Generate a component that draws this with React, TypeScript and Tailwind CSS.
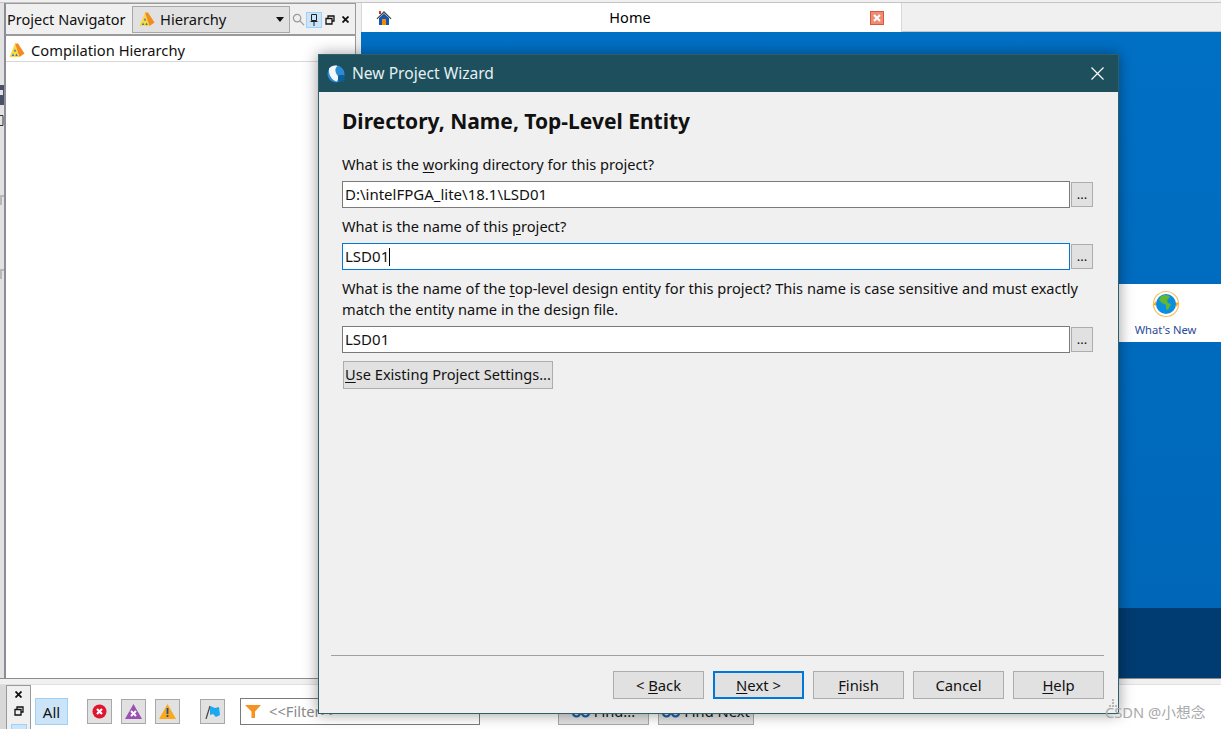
import React from "react";

const font = { fontFamily: '"Noto Sans", "Noto Sans CJK SC", sans-serif' };

function Pyramid() {
  return (
    <svg width="16" height="15" viewBox="0 0 16 15" className="shrink-0">
      <path d="M6 0.500 L0.500 14 H10.500 Z" fill="#ffd83a" />
      <path d="M6 0.500 L9 0.500 L15.500 10.500 L10.500 14 Z" fill="#f28c1e" />
      <path d="M6 6l1.200 2.500H4.800zM4 10.500l1.200 2.500H2.800zM7.500 10.500l1.200 2.500H6.300z" fill="#1a7fd6" />
    </svg>
  );
}

function U({ children }: { children: React.ReactNode }) {
  return <span className="underline underline-offset-2 decoration-1">{children}</span>;
}

function IconTool({ children }: { children: React.ReactNode }) {
  return (
    <div className="flex h-[25px] w-[25px] items-center justify-center border border-[#a8a8a8] bg-[#e1e1e1]">
      {children}
    </div>
  );
}

function WizardButton({ children, primary }: { children: React.ReactNode; primary?: boolean }) {
  return (
    <button
      className={
        primary
          ? "flex h-[28px] w-[91px] items-center justify-center whitespace-pre border-2 border-[#0078d7] bg-[#e1e1e1] text-[14.8px] text-[#111]"
          : "flex h-[28px] w-[91px] items-center justify-center whitespace-pre border border-[#adadad] bg-[#e1e1e1] text-[14.8px] text-[#111]"
      }
    >
      {children}
    </button>
  );
}

function Field({ value, focused }: { value: string; focused?: boolean }) {
  return (
    <div className="flex h-[27px] items-center gap-[1px]">
      <div
        className={
          focused
            ? "flex h-[27px] w-[728px] items-center border border-[#0078d7] bg-white pl-[2px] text-[15px] text-[#111]"
            : "flex h-[27px] w-[728px] items-center border border-[#7a7a7a] bg-white pl-[2px] text-[15px] text-[#111]"
        }
      >
        <span>{value}</span>
        {focused && <span className="h-[18px] w-px bg-black" />}
      </div>
      <button className="flex h-[25px] w-[22px] items-center justify-center border border-[#adadad] bg-[#e1e1e1] text-[13px] leading-none text-[#111]">
        ...
      </button>
    </div>
  );
}

function Binoculars() {
  return (
    <svg width="18" height="12" viewBox="0 0 18 12" fill="none" stroke="#1c5fa8" strokeWidth="2.200" className="shrink-0">
      <circle cx="4.500" cy="7" r="3.500" />
      <circle cx="13.500" cy="7" r="3.500" />
      <path d="M8 6h2" stroke="#333" />
    </svg>
  );
}

export default function App() {
  return (
    <div
      style={font}
      className="relative flex h-[729px] w-[1221px] flex-col overflow-hidden bg-white text-[14.7px] text-[#111]"
    >
      {/* Top edge */}
      <div className="h-[3px] shrink-0 border-b border-[#c4c4c4] bg-[#f0f0f0]" />

      {/* Main area */}
      <div className="flex h-[675px] shrink-0 bg-[#f0f0f0]">
        <div className="h-full w-[6px] shrink-0 border-r-2 border-[#8c8c98] bg-[#e2e2e2]">
          <svg width="4" height="290" viewBox="0 0 4 290" className="block">
            <path d="M0 82h4v20H0z" fill="#4a5068" />
            <rect x="0" y="87" width="3" height="5" fill="#e2e2e2" />
            <path d="M0 112.500h3v10H0" fill="none" stroke="#333" />
            <path d="M0 192h4v2H2v8H0zM0 266h4v2H2v8H0z" fill="#b8b8b8" />
          </svg>
        </div>
        <div className="flex w-[350px] shrink-0 flex-col border-r border-[#9a9a9a]">
          <div className="flex h-[33px] shrink-0 items-center border-b-2 border-t border-[#9a9a9a] bg-[#f0f0f0] pl-[1px] pt-[1px]">
            <span className="w-[125px] shrink-0 whitespace-nowrap text-[14.5px]">Project Navigator</span>
            <div className="flex h-[27px] w-[158px] shrink-0 items-center gap-[5px] border border-[#a8a8a8] bg-[#e1e1e1] pl-[6px]">
              <Pyramid />
              <span className="flex-1">Hierarchy</span>
              <svg width="8" height="5" viewBox="0 0 8 5" className="mr-[5px]"><path d="M0 0h8L4 5z" fill="#111" /></svg>
            </div>
            <svg width="13" height="13" viewBox="0 0 14 14" className="ml-[2px]" fill="none" stroke="#999" strokeWidth="1.300">
              <circle cx="5.500" cy="5.500" r="4" /><path d="M8.500 8.500L13 13" />
            </svg>
            <div className="ml-[1px] flex h-[16px] w-[16px] items-center justify-center border border-[#9fd0f5] bg-[#cce4f7]">
              <svg width="8" height="12" viewBox="0 0 8 12" fill="none" stroke="#222"><path d="M1.500.5h5v6h-5zM.5 7.500h7M4 8v4" /></svg>
            </div>
            <svg width="10" height="10" viewBox="0 0 10 10" className="ml-[3px]" fill="none" stroke="#111" strokeWidth="1.300"><path d="M3 3V1h6v5H7M1 3.500h6v5.500H1z" /></svg>
            <svg width="7" height="7" viewBox="0 0 7 7" className="ml-[7px]" stroke="#111" strokeWidth="1.800"><path d="M.5.5l6 6M6.500.5l-6 6" /></svg>
          </div>
          <div className="flex-1 bg-white">
            <div className="flex h-[26px] items-center gap-[6px] border-b border-[#d8d8d8] pl-[3px] pt-[3px]">
              <Pyramid />
              <span>Compilation Hierarchy</span>
            </div>
          </div>
        </div>
        <div className="w-[5px] shrink-0 bg-[#f0f0f0]" />
        <div className="flex min-w-0 flex-1 flex-col">
          <div className="flex h-[29px] shrink-0 bg-[#f0f0f0]">
            <div className="relative flex h-[29px] w-[541px] items-center justify-center border-l border-r border-[#d8d8d8] bg-white text-[14.500px] text-black">
              <svg width="16" height="16" viewBox="0 0 16 16" className="absolute left-[14px] top-[7px]">
                <path d="M8 1L0.500 8.500 1.300 9.300 8 3l6.700 6.300.8-.8z" fill="#444" />
                <path d="M3 8l5-4.500L13 8v7H3z" fill="#1457b3" />
                <rect x="6" y="9" width="4" height="6" fill="#f08c00" />
                <rect x="3" y="1" width="2" height="3" fill="#c0392b" />
              </svg>
              <span className="pr-[3px] pt-[1px]">Home</span>
              <div className="absolute left-[508px] top-[8px] flex h-[14px] w-[14px] items-center justify-center border border-[#d9583a] bg-[#ee8c73]">
                <svg width="8" height="8" viewBox="0 0 8 8" stroke="#fff" strokeWidth="2"><path d="M1 1l6 6M7 1L1 7" /></svg>
              </div>
            </div>
            <div className="flex-1 border-b border-[#c8c8c8]" />
          </div>
          <div className="flex flex-1 flex-col">
            <div className="flex h-[576px] flex-col items-end bg-[linear-gradient(#0070c5,#0067b8)] pt-[252px]">
              <div className="flex h-[58px] w-[103px] flex-col items-center justify-center bg-white pr-[8px] text-[11.200px] text-[#2a4a9a]">
                <svg width="30" height="30" viewBox="0 0 30 30" className="mt-[-1px]">
                  <circle cx="15" cy="14" r="12.500" fill="none" stroke="#f9bd5a" strokeWidth="1.200" />
                  <path d="M2 15l3-4 2 5zM28 13l-3 4-2-5z" fill="#f7a823" />
                  <circle cx="15" cy="14" r="10" fill="#0a8fe0" />
                  <path d="M10 6c4-2 8-1 9 1l-3 3 1 3 3 1-3 6-2-1v-4l-4-2-3-3z" fill="#63b62f" />
                </svg>
                <span className="mt-[4px] leading-none">What's New</span>
              </div>
            </div>
            <div className="flex-1 bg-[#003c71]" />
          </div>
        </div>
      </div>

      {/* Bottom area */}
      <div className="flex flex-1 flex-col border-t border-[#8c8c8c]">
        <div className="h-[5px] shrink-0 bg-[#f0f0f0]" />
        <div className="flex flex-1 border-t border-[#e0e0e0] bg-white">
          <div className="w-[6px] shrink-0 bg-[#d8d8d8]" />
          <div className="flex w-[25px] shrink-0 flex-col items-center gap-[8px] border border-b-0 border-[#9a9a9a] bg-[#f0f0f0] pt-[5px]">
            <svg width="7" height="7" viewBox="0 0 7 7" stroke="#111" strokeWidth="1.800"><path d="M.5.5l6 6M6.500.5l-6 6" /></svg>
            <svg width="10" height="10" viewBox="0 0 10 10" fill="none" stroke="#111" strokeWidth="1.300"><path d="M3 3V1h6v5H7M1 3.500h6v5.500H1z" /></svg>
            <div className="h-[10px] w-[16px] border border-[#9fd0f5] bg-[#cce4f7]" />
          </div>
          <div className="flex items-start pl-[4px] pt-[13px]">
            <div className="flex h-[27px] w-[33px] items-end justify-center border border-[#9fd0f5] bg-[#cce4f7] text-[15px] leading-[24px]">All</div>
            <div className="ml-[19px] mt-[1px]">
              <IconTool>
                <svg width="15" height="15" viewBox="0 0 15 15"><circle cx="7.500" cy="7.500" r="7" fill="#e0142c" /><path d="M5 5l5 5M10 5l-5 5" stroke="#fff" strokeWidth="2.200" /></svg>
              </IconTool>
            </div>
            <div className="ml-[9px] mt-[1px]">
              <IconTool>
                <svg width="17" height="15" viewBox="0 0 17 15"><path d="M8.500 0L17 15H0z" fill="#9b4fb4" /><path d="M6 7l5 5M11 7l-5 5" stroke="#fff" strokeWidth="2" /></svg>
              </IconTool>
            </div>
            <div className="ml-[9px] mt-[1px]">
              <IconTool>
                <svg width="17" height="15" viewBox="0 0 17 15"><path d="M8.500 0L17 15H0z" fill="#fba81b" /><path d="M8.500 4v6M8.500 11v2" stroke="#1a4f9c" strokeWidth="1.800" /></svg>
              </IconTool>
            </div>
            <div className="ml-[20px] mt-[1px]">
              <IconTool>
                <svg width="16" height="14" viewBox="0 0 16 14"><path d="M1 14L5 1" stroke="#444" strokeWidth="1.200" /><path d="M5 1l5 2 4-1 1 8-4 2-3-3-3 1z" fill="#1ba8f0" /></svg>
              </IconTool>
            </div>
            <div className="ml-[15px] flex h-[27px] w-[240px] items-center gap-[7px] border border-[#7a7a7a] bg-white pl-[4px] text-[#8a8a8a]">
              <svg width="17" height="14" viewBox="0 0 17 14"><path d="M0 0h16L10 6.500V13H6.500V6.500z" fill="#f7921e" /></svg>
              <span>&lt;&lt;Filter&gt;&gt;</span>
            </div>
            <div className="ml-[78px] flex h-[27px] w-[91px] items-center justify-center gap-[4px] border border-[#a8a8a8] bg-[#e1e1e1]"><Binoculars />Find...</div>
            <div className="ml-[9px] flex h-[27px] w-[96px] items-center justify-center gap-[4px] whitespace-nowrap border border-[#a8a8a8] bg-[#e1e1e1]"><Binoculars />Find Next</div>
          </div>
        </div>
      </div>

      {/* Dialog window */}
      <div className="absolute left-[318px] top-[54px] flex h-[660px] w-[801px] flex-col border border-[#2f5f6b] bg-[#f0f0f0] shadow-[0_0_14px_rgba(0,0,0,0.4)]">
        <div className="flex h-[37px] shrink-0 items-center bg-[#1d4f5c] pl-[8px] pr-[14px] text-white">
          <svg width="18" height="18" viewBox="0 0 18 18" className="shrink-0">
            <circle cx="9" cy="9" r="8.500" fill="#2c8ccf" />
            <path d="M2 3.500C4 1 8 0 10.500 1 7.500 3 7.500 8 12 12l-2 4.500C5 15.500 1.200 10 2 3.500z" fill="#f2f8fc" />
            <rect x="11" y="10" width="6.500" height="6.500" rx="1.500" fill="#0d5f9c" />
          </svg>
          <span className="ml-[7px] flex-1 text-[15.600px] text-[#e6f0f2]">New Project Wizard</span>
          <svg width="13" height="13" viewBox="0 0 13 13" stroke="#fff" strokeWidth="1.200"><path d="M.5.5l12 12M12.500.5l-12 12" /></svg>
        </div>
        <div className="flex flex-1 flex-col pl-[23px] pr-[25px]">
          <h1 className="mt-[13px] h-[32px] whitespace-nowrap text-[21px] font-bold leading-[32px] text-[#111]">Directory, Name, Top-Level Entity</h1>
          <p className="mt-[17px] h-[20px] whitespace-nowrap text-[14.600px] leading-[20px]">What is the <U>w</U>orking directory for this project?</p>
          <div className="mt-[7px]"><Field value="D:\intelFPGA_lite\18.1\LSD01" /></div>
          <p className="mt-[8px] h-[20px] whitespace-nowrap text-[14.600px] leading-[20px]">What is the name of this <U>p</U>roject?</p>
          <div className="mt-[7px]"><Field value="LSD01" focused /></div>
          <p className="mt-[8px] whitespace-nowrap text-[14.600px] leading-[21px]">What is the name of the <U>t</U>op-level design entity for this project? This name is case sensitive and must exactly<br />match the entity name in the design file.</p>
          <div className="mt-[6px]"><Field value="LSD01" /></div>
          <button className="ml-[1px] mt-[8px] flex h-[28px] w-[210px] items-center justify-center whitespace-nowrap border border-[#adadad] bg-[#e1e1e1] text-[14.600px] text-[#111]"><span><U>U</U>se Existing Project Settings...</span></button>
        </div>
        <div className="ml-[12px] mr-[14px] mt-auto border-t border-[#a0a0a0]" />
        <div className="flex h-[57px] shrink-0 items-start justify-end gap-[9px] pr-[14px] pt-[15px]">
          <WizardButton>&lt; <U>B</U>ack</WizardButton>
          <WizardButton primary><U>N</U>ext &gt;</WizardButton>
          <WizardButton><U>F</U>inish</WizardButton>
          <WizardButton>Cancel</WizardButton>
          <WizardButton><U>H</U>elp</WizardButton>
        </div>
      </div>

      {/* Watermark */}
      <svg width="10" height="12" viewBox="0 0 10 12" className="absolute left-[1108px] top-[699px]" fill="#b8b8b8">
        <path d="M4 0h2v2H4zM4 3h2v2H4zM1 6h2v2H1zM4 6h2v2H4zM7 6h2v2H7z" />
      </svg>
      <span className="absolute left-[1105px] top-[701px] whitespace-nowrap text-[14.700px] text-[#a9a9a9]">CSDN @小想念</span>
    </div>
  );
}
